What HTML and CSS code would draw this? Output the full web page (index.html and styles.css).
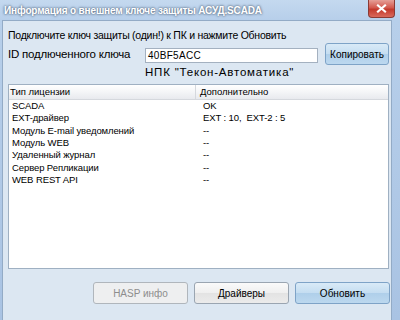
FILE: index.html
```html
<!DOCTYPE html>
<html>
<head>
<meta charset="utf-8">
<link rel="stylesheet" href="styles.css">
</head>
<body>
<div class="window">
  <div class="titlebar">
    <span class="title">Информация о внешнем ключе защиты АСУД.SCADA</span>
    <span class="close"><svg width="11" height="9" viewBox="0 0 11 9"><path d="M2 1.5 L9 7.5 M9 1.5 L2 7.5" stroke="#fff" stroke-width="2.2" stroke-linecap="square"/></svg></span>
  </div>
  <div class="client">
    <div class="hint">Подключите ключ защиты (один!) к ПК и нажмите Обновить</div>
    <div class="idrow">
      <span class="idlabel">ID подлюченного ключа</span>
      <span class="input">40BF5ACC</span>
      <span class="btn blue copy">Копировать</span>
    </div>
    <div class="company">НПК "Текон-Автоматика"</div>
    <div class="list">
      <div class="lhead">
        <span class="c1">Тип лицензии</span>
        <span class="c2">Дополнительно</span>
      </div>
      <div class="lrow"><span class="c1">SCADA</span><span class="c2">OK</span></div>
      <div class="lrow"><span class="c1">EXT-драйвер</span><span class="c2">EXT : 10,&nbsp; EXT-2 : 5</span></div>
      <div class="lrow"><span class="c1">Модуль E-mail уведомлений</span><span class="c2">--</span></div>
      <div class="lrow"><span class="c1">Модуль WEB</span><span class="c2">--</span></div>
      <div class="lrow"><span class="c1">Удаленный журнал</span><span class="c2">--</span></div>
      <div class="lrow"><span class="c1">Сервер Репликации</span><span class="c2">--</span></div>
      <div class="lrow"><span class="c1">WEB REST API</span><span class="c2">--</span></div>
    </div>
    <div class="buttons">
      <span class="btn disabled">HASP инфо</span>
      <span class="btn normal">Драйверы</span>
      <span class="btn blue">Обновить</span>
    </div>
  </div>
</div>
</body>
</html>
```
FILE: styles.css
```css
html, body {
  margin: 0;
  padding: 0;
}
body {
  width: 400px;
  height: 320px;
  overflow: hidden;
  font-family: "Liberation Sans", Arial, sans-serif;
  color: #000;
}
.window {
  width: 400px;
  height: 320px;
  background: linear-gradient(to bottom, #c4d9ef 0px, #b7cfea 20px, #a9c3e3 100%);
  display: flex;
  flex-direction: column;
}
.titlebar {
  height: 20px;
  display: flex;
  align-items: center;
  position: relative;
}
.title {
  margin-left: 4px;
  font-weight: bold;
  font-size: 10px;
  letter-spacing: -0.15px;
  color: #fff;
  text-shadow: 0 0 3px #5a6e85, 0 0 2px #5a6e85;
}
.close {
  position: absolute;
  left: 368px;
  top: 0;
  width: 27px;
  height: 18px;
  border: 1px solid #8a3a34;
  border-top: none;
  border-radius: 0 0 4px 4px;
  background: linear-gradient(to bottom, #e59f97 0%, #d3594e 45%, #c3392c 55%, #d9695c 100%);
  box-sizing: border-box;
  display: flex;
  align-items: center;
  justify-content: center;
}
.client {
  margin: 0 8px 0 2px;
  flex: 1;
  background: #dce7f2;
  border: 1px solid #93abc6;
  border-bottom: none;
  padding: 0 0 0 5px;
}
.hint {
  font-size: 10.5px;
  letter-spacing: -0.25px;
  margin-top: 8px;
  height: 13px;
  line-height: 13px;
}
.idrow {
  display: flex;
  align-items: center;
  margin-top: 1px;
  height: 22px;
}
.idlabel {
  font-size: 11.5px;
  letter-spacing: -0.2px;
  width: 137px;
  white-space: nowrap;
}
.input {
  width: 173px;
  height: 15px;
  box-sizing: border-box;
  background: #fff;
  border: 1px solid #a4b1c0;
  font-size: 10px;
  letter-spacing: 0.3px;
  line-height: 13px;
  padding-left: 2px;
  margin-top: 3px;
}
.btn {
  display: flex;
  align-items: center;
  justify-content: center;
  box-sizing: border-box;
  border-radius: 3px;
  font-size: 10px;
}
.copy {
  width: 64px;
  height: 22px;
  margin-left: 7px;
}
.blue {
  background: linear-gradient(to bottom, #d9eaf7 0%, #c4ddf1 50%, #afcfea 51%, #bcd8ef 100%);
  border: 1px solid #7ea3c7;
}
.normal {
  background: linear-gradient(to bottom, #fafafa 0%, #efefef 50%, #e3e3e3 51%, #ebebeb 100%);
  border: 1px solid #9aa5b1;
}
.disabled {
  background: #eeeff0;
  border: 1px solid #b0b6bc;
  color: #8d8d8d;
}
.company {
  font-size: 11.5px;
  letter-spacing: 0.8px;
  margin-left: 137px;
  height: 13px;
  line-height: 13px;
  margin-top: 1px;
}
.list {
  margin-top: 5px;
  width: 381px;
  height: 185px;
  box-sizing: border-box;
  background: #fff;
  border: 1px solid #9fb0c2;
}
.lhead {
  display: flex;
  height: 15px;
  box-sizing: border-box;
  background: linear-gradient(to bottom, #ffffff 0%, #f4f5f7 50%, #e8eaee 100%);
  border-bottom: 1px solid #d5d8dd;
  font-size: 9.5px;
  line-height: 14px;
}
.lhead .c1 {
  box-sizing: border-box;
  width: 187px;
  padding-left: 1px;
  border-right: 1px solid #d5d8dd;
}
.lhead .c2 {
  padding-left: 4px;
}
.lrow {
  display: flex;
  height: 12.33px;
  line-height: 12px;
  font-size: 9.5px;
  letter-spacing: -0.1px;
}
.lrow:first-of-type {
  margin-top: 1px;
}
.lrow .c1 {
  box-sizing: border-box;
  width: 191px;
  padding-left: 3px;
}
.lrow .c2 {
  padding-left: 3px;
}
.buttons {
  display: flex;
  justify-content: flex-end;
  gap: 6px;
  margin-top: 13px;
  width: 382px;
}
.buttons .btn {
  width: 95px;
  height: 22px;
}
```
